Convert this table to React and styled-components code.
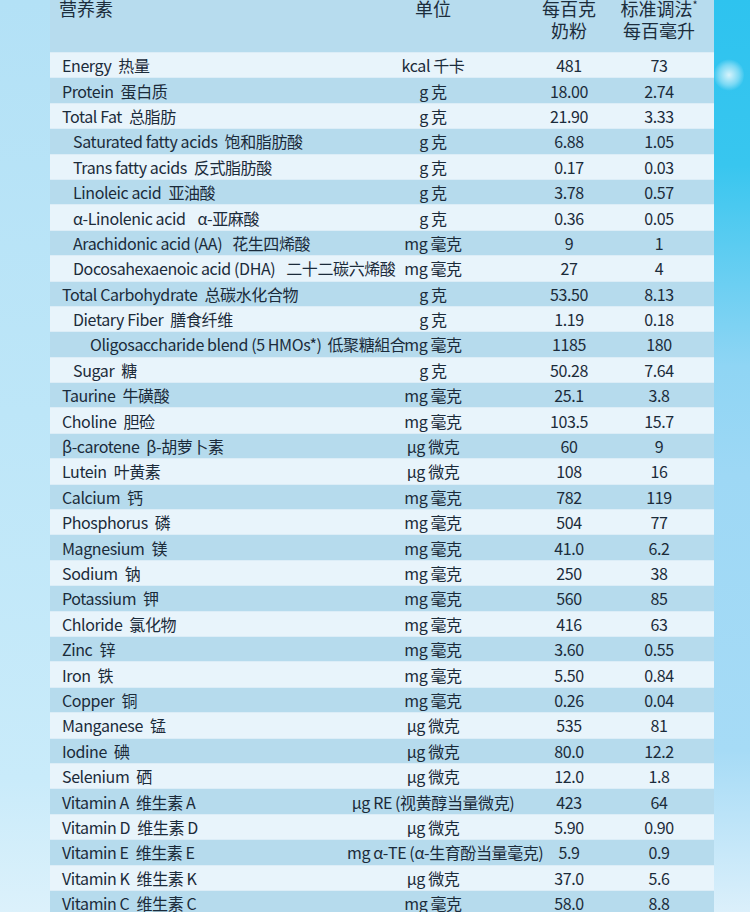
import React from 'react';
import styled, { createGlobalStyle } from 'styled-components';

const GlobalStyle = createGlobalStyle`
  html, body {
    margin: 0;
    padding: 0;
  }
  body {
    font-family: "Noto Sans CJK SC", "Noto Sans", sans-serif;
    color: #1b2b3a;
  }
`;

const COLUMNS = '297px 172px 100px 80px 15px';

const Page = styled.div`
  width: 750px;
  height: 912px;
  overflow: hidden;
  display: grid;
  grid-template-columns: 50px 664px 36px;
`;

const SideLeft = styled.div`
  background: linear-gradient(180deg, #b3e1f6 0%, #bde6f8 45%, #c9ebfa 85%, #dcf1fb 100%);
`;

const SideRight = styled.div`
  position: relative;
  background: linear-gradient(
    180deg,
    #2ec3ef 0%,
    #38c6ef 18%,
    #8fd5f4 40%,
    #9ed8f5 52%,
    #a6dbf6 82%,
    #dcf0fb 100%
  );
`;

const Glow = styled.span`
  position: absolute;
  left: 0;
  top: 58px;
  width: 30px;
  height: 34px;
  border-radius: 50%;
  background: radial-gradient(
    circle,
    rgba(255, 255, 255, 0.8) 0%,
    rgba(255, 255, 255, 0.35) 45%,
    rgba(255, 255, 255, 0) 70%
  );
`;

const Table = styled.div`
  display: flex;
  flex-direction: column;
  gap: 1px;
  background: #dcedf7;
`;

const HeaderRow = styled.div`
  display: grid;
  grid-template-columns: ${COLUMNS};
  height: 52px;
  flex: none;
  background: #b7dcee;
  font-size: 18px;
  line-height: 22px;
  color: #1c2d3c;
`;

const HeadCell = styled.div`
  margin-top: -3px;
  text-align: ${p => p.$align || 'center'};
  padding-left: ${p => (p.$align === 'left' ? '9px' : '0')};
  white-space: nowrap;

  sup {
    font-size: 11px;
    line-height: 0;
    vertical-align: 7px;
  }
`;

const Row = styled.div`
  display: grid;
  grid-template-columns: ${COLUMNS};
  align-items: center;
  height: 24.4px;
  flex: none;
  background: ${p => (p.$shade ? '#b6dbed' : '#e8f4fb')};
  font-size: 16px;
  line-height: 20px;
  letter-spacing: -0.4px;
  white-space: nowrap;
`;

const NameCell = styled.div`
  padding-left: ${p => [12, 23, 40][p.$level]}px;
`;

const Zh = styled.span`
  margin-left: ${p => p.$gap}px;
`;

const Cell = styled.div`
  text-align: center;
`;

const rows = [
  ['Energy', '热量', 'kcal 千卡', '481', '73', 0],
  ['Protein', '蛋白质', 'g 克', '18.00', '2.74', 0],
  ['Total Fat', '总脂肪', 'g 克', '21.90', '3.33', 0],
  ['Saturated fatty acids', '饱和脂肪酸', 'g 克', '6.88', '1.05', 1],
  ['Trans fatty acids', '反式脂肪酸', 'g 克', '0.17', '0.03', 1],
  ['Linoleic acid', '亚油酸', 'g 克', '3.78', '0.57', 1],
  ['α-Linolenic acid', 'α-亚麻酸', 'g 克', '0.36', '0.05', 1, 12],
  ['Arachidonic acid (AA)', '花生四烯酸', 'mg 毫克', '9', '1', 1, 10],
  ['Docosahexaenoic acid (DHA)', '二十二碳六烯酸', 'mg 毫克', '27', '4', 1, 11],
  ['Total Carbohydrate', '总碳水化合物', 'g 克', '53.50', '8.13', 0],
  ['Dietary Fiber', '膳食纤维', 'g 克', '1.19', '0.18', 1],
  ['Oligosaccharide blend (5 HMOs*)', '低聚糖組合', 'mg 毫克', '1185', '180', 2, 6],
  ['Sugar', '糖', 'g 克', '50.28', '7.64', 1],
  ['Taurine', '牛磺酸', 'mg 毫克', '25.1', '3.8', 0],
  ['Choline', '胆硷', 'mg 毫克', '103.5', '15.7', 0],
  ['β-carotene', 'β-胡萝卜素', 'μg 微克', '60', '9', 0],
  ['Lutein', '叶黄素', 'μg 微克', '108', '16', 0],
  ['Calcium', '钙', 'mg 毫克', '782', '119', 0],
  ['Phosphorus', '磷', 'mg 毫克', '504', '77', 0],
  ['Magnesium', '镁', 'mg 毫克', '41.0', '6.2', 0],
  ['Sodium', '钠', 'mg 毫克', '250', '38', 0],
  ['Potassium', '钾', 'mg 毫克', '560', '85', 0],
  ['Chloride', '氯化物', 'mg 毫克', '416', '63', 0],
  ['Zinc', '锌', 'mg 毫克', '3.60', '0.55', 0],
  ['Iron', '铁', 'mg 毫克', '5.50', '0.84', 0],
  ['Copper', '铜', 'mg 毫克', '0.26', '0.04', 0],
  ['Manganese', '锰', 'μg 微克', '535', '81', 0],
  ['Iodine', '碘', 'μg 微克', '80.0', '12.2', 0],
  ['Selenium', '硒', 'μg 微克', '12.0', '1.8', 0],
  ['Vitamin A', '维生素 A', 'μg RE (视黄醇当量微克)', '423', '64', 0],
  ['Vitamin D', '维生素 D', 'μg 微克', '5.90', '0.90', 0],
  ['Vitamin E', '维生素 E', 'mg α-TE (α-生育酚当量毫克)', '5.9', '0.9', 0],
  ['Vitamin K', '维生素 K', 'μg 微克', '37.0', '5.6', 0],
  ['Vitamin C', '维生素 C', 'mg 毫克', '58.0', '8.8', 0],
];

export default function App() {
  return (
    <>
      <GlobalStyle />
      <Page>
        <SideLeft />
        <Table>
          <HeaderRow>
            <HeadCell $align="left">营养素</HeadCell>
            <HeadCell>单位</HeadCell>
            <HeadCell>
              每百克
              <br />
              奶粉
            </HeadCell>
            <HeadCell>
              标准调法<sup>*</sup>
              <br />
              每百毫升
            </HeadCell>
            <div />
          </HeaderRow>
          {rows.map(([en, zh, unit, powder, milk, level, gap = 7], i) => (
            <Row key={en} $shade={i % 2 === 1}>
              <NameCell $level={level}>
                {en}
                <Zh $gap={gap}>{zh}</Zh>
              </NameCell>
              <Cell>{unit}</Cell>
              <Cell>{powder}</Cell>
              <Cell>{milk}</Cell>
              <div />
            </Row>
          ))}
        </Table>
        <SideRight>
          <Glow />
        </SideRight>
      </Page>
    </>
  );
}
